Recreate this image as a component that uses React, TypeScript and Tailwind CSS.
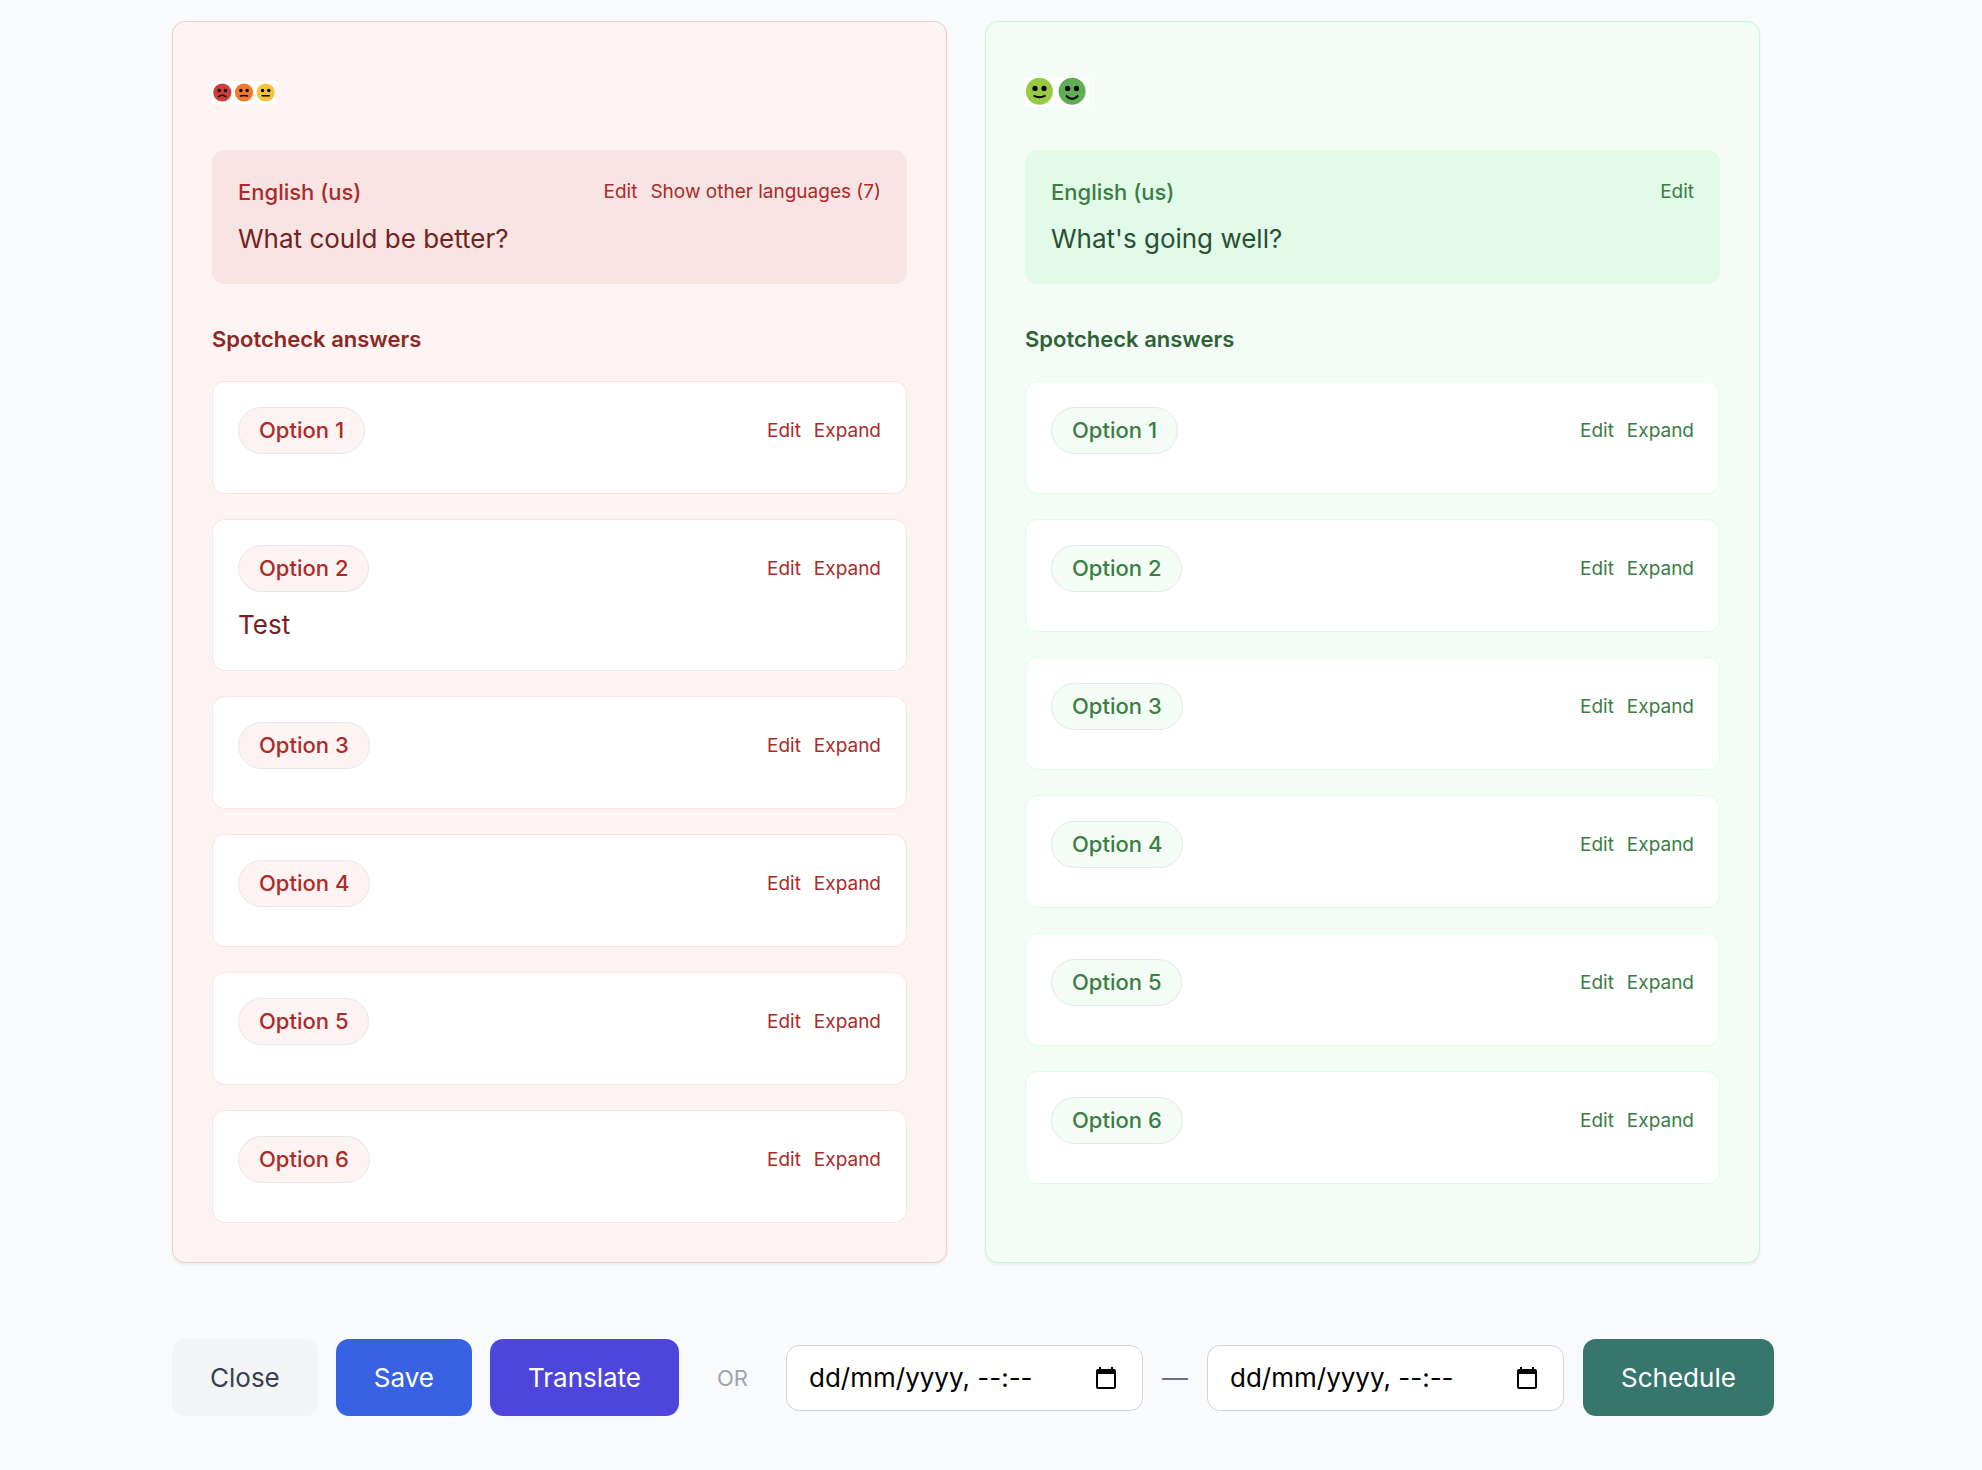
import React from "react";

type Tone = "red" | "green";

const tones = {
  red: {
    card: "bg-[#fdf3f2] border-[#f5cac9]",
    panel: "bg-[#f8e4e3]",
    accent: "text-[#ab2b28]",
    heading: "text-[#8b2823]",
    body: "text-[#722321]",
    answer: "border-[#fae4e3]",
    pill: "bg-[#fdf3f2]",
  },
  green: {
    card: "bg-[#f3fdf5] border-[#c6f6d2]",
    panel: "bg-[#e2fae8]",
    accent: "text-[#3b7d44]",
    heading: "text-[#2f6139]",
    body: "text-[#285033]",
    answer: "border-[#e2fae8]",
    pill: "bg-[#f3fdf5]",
  },
};

interface Answer {
  label: string;
  text?: string;
}

const negativeAnswers: Answer[] = [
  { label: "Option 1" },
  { label: "Option 2", text: "Test" },
  { label: "Option 3" },
  { label: "Option 4" },
  { label: "Option 5" },
  { label: "Option 6" },
];

const positiveAnswers: Answer[] = [
  { label: "Option 1" },
  { label: "Option 2" },
  { label: "Option 3" },
  { label: "Option 4" },
  { label: "Option 5" },
  { label: "Option 6" },
];

function SadFaces() {
  return (
    <svg width="64" height="23" viewBox="0 0 64 23" role="img" aria-label="Unhappy faces">
      <rect width="64" height="23" fill="#fff" />
      <circle cx="10.3" cy="11.5" r="9.1" fill="#cb3f38" />
      <circle cx="32" cy="11.5" r="9.1" fill="#ee7c30" />
      <circle cx="53.7" cy="11.5" r="9.1" fill="#f4c23f" />
      <g fill="#000">
        <circle cx="7.2" cy="9.5" r="1.7" />
        <circle cx="13.4" cy="9.5" r="1.7" />
        <circle cx="28.9" cy="9.5" r="1.7" />
        <circle cx="35.1" cy="9.5" r="1.7" />
        <circle cx="50.6" cy="9.5" r="1.7" />
        <circle cx="56.8" cy="9.5" r="1.7" />
      </g>
      <g fill="none" stroke="#000" strokeWidth="1.5" strokeLinecap="round">
        <path d="M6.7 15.6Q10.3 12.8 13.9 15.6" />
        <path d="M28.4 15Q32 13.8 35.6 15" />
        <path d="M50.1 14.7H57.3" />
      </g>
    </svg>
  );
}

function HappyFaces() {
  return (
    <svg width="64" height="30" viewBox="0 0 64 30" role="img" aria-label="Happy faces">
      <rect width="64" height="30" fill="#fff" />
      <circle cx="14.4" cy="14.3" r="13.5" fill="#97ca40" />
      <circle cx="47.1" cy="14.3" r="13.5" fill="#61ad55" />
      <g fill="#000">
        <circle cx="10" cy="11.4" r="2.6" />
        <circle cx="19" cy="11.4" r="2.6" />
        <circle cx="42.6" cy="11.4" r="2.6" />
        <circle cx="51.5" cy="11.4" r="2.6" />
      </g>
      <g fill="none" stroke="#000" strokeWidth="2.1" strokeLinecap="round">
        <path d="M9.3 18.9Q14.4 21.6 19.7 18.9" />
        <path d="M41.7 19.2Q47.1 24.4 52.5 19.2" />
      </g>
    </svg>
  );
}

function LinkButton({ tone, children }: { tone: Tone; children: React.ReactNode }) {
  return (
    <button type="button" className={`text-[19px] leading-8 ${tones[tone].accent}`}>
      {children}
    </button>
  );
}

function FeedbackCard(props: {
  tone: Tone;
  faces: React.ReactNode;
  question: string;
  otherLanguages?: number;
  answers: Answer[];
}) {
  const { tone, faces, question, otherLanguages, answers } = props;
  const t = tones[tone];
  return (
    <section className={`rounded-[13px] border p-[39px] shadow-[0_2px_3px_rgba(0,0,0,0.06)] ${t.card}`}>
      <div className="mb-[27px] flex h-[62px] items-center">{faces}</div>
      <div className={`rounded-[13px] p-[26px] ${t.panel}`}>
        <div className="flex items-center justify-between">
          <h2 className={`text-[22px] leading-8 font-medium ${t.accent}`}>English (us)</h2>
          <div className="flex gap-[13px]">
            <LinkButton tone={tone}>Edit</LinkButton>
            {otherLanguages ? (
              <LinkButton tone={tone}>Show other languages ({otherLanguages})</LinkButton>
            ) : null}
          </div>
        </div>
        <p className={`mt-3 text-[26px] leading-[38px] ${t.body}`}>{question}</p>
      </div>
      <h3 className={`mt-[39px] mb-[26px] text-[22px] leading-8 font-semibold ${t.heading}`}>
        Spotcheck answers
      </h3>
      <ul className="flex flex-col gap-[25px]">
        {answers.map((a) => (
          <li key={a.label} className={`rounded-[13px] border bg-white px-[25px] pt-[25px] pb-[26px] ${t.answer}`}>
            <div className="flex items-center justify-between">
              <span
                className={`rounded-full border border-[#e5e7eb] px-5 py-[6px] text-[22px] leading-[33px] font-medium ${t.pill} ${t.accent}`}
              >
                {a.label}
              </span>
              <div className="flex gap-[13px]">
                <LinkButton tone={tone}>Edit</LinkButton>
                <LinkButton tone={tone}>Expand</LinkButton>
              </div>
            </div>
            <p className={`mt-[13px] text-[26px] leading-[39px] ${t.body}`}>{a.text}</p>
          </li>
        ))}
      </ul>
    </section>
  );
}

function DateTimeField({ label }: { label: string }) {
  return (
    <div className="flex h-[66px] w-[357px] items-center rounded-[13px] border border-[#d2d5db] bg-white pr-6 pl-[22px]">
      <input
        type="text"
        aria-label={label}
        placeholder="dd/mm/yyyy, --:--"
        className="min-w-0 flex-1 bg-transparent text-[26px] leading-[38px] text-black outline-none placeholder:text-black placeholder:opacity-100"
      />
      <button type="button" aria-label={`Open ${label} picker`}>
        <svg width="24" height="24" viewBox="0 0 24 24" className="block">
          <path d="M20 3h-1V1h-2v2H7V1H5v2H4c-1.1 0-2 .9-2 2v16c0 1.1.9 2 2 2h16c1.1 0 2-.9 2-2V5c0-1.1-.9-2-2-2zm0 18H4V8h16v13z" />
        </svg>
      </button>
    </div>
  );
}

function ActionButton({ color, children }: { color: string; children: React.ReactNode }) {
  return (
    <button type="button" className={`rounded-[13px] px-[38px] py-[19px] text-[26px] leading-[39px] ${color}`}>
      {children}
    </button>
  );
}

export default function App() {
  return (
    <main className="min-h-screen bg-[#f9fafc] pt-[21px] pb-[54px] pl-[172px] font-['Inter',sans-serif]">
      <div className="mr-[222px] grid grid-cols-2 gap-[38px]">
        <FeedbackCard
          tone="red"
          faces={<SadFaces />}
          question="What could be better?"
          otherLanguages={7}
          answers={negativeAnswers}
        />
        <FeedbackCard
          tone="green"
          faces={<HappyFaces />}
          question="What's going well?"
          answers={positiveAnswers}
        />
      </div>
      <div className="mt-[76px] flex items-center gap-[18px]">
        <ActionButton color="bg-[#f3f4f6] text-[#394151]">Close</ActionButton>
        <ActionButton color="bg-[#3662e3] text-white">Save</ActionButton>
        <ActionButton color="bg-[#4e46dc] text-white">Translate</ActionButton>
        <span className="mx-5 text-[22px] leading-8 text-[#9fa4b0]">OR</span>
        <div className="flex items-center gap-[19px]">
          <DateTimeField label="Start date" />
          <span className="text-[26px] leading-[38px] text-[#6d7380]">—</span>
          <DateTimeField label="End date" />
          <ActionButton color="bg-[#37766d] text-white">Schedule</ActionButton>
        </div>
      </div>
    </main>
  );
}
